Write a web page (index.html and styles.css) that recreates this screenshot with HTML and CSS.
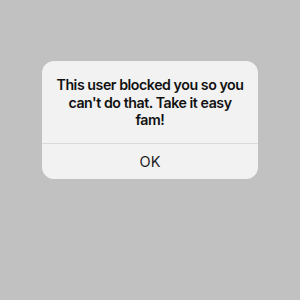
FILE: index.html
```html
<!DOCTYPE html>
<html>
<head><link rel="stylesheet" href="styles.css"></head>
<body>
<div class="screen">
  <div class="alert">
    <div class="message">This user blocked you so you can't do that. Take it easy fam!</div>
    <div class="action">OK</div>
  </div>
</div>
</body>
</html>
```
FILE: styles.css
```css
html, body { margin: 0; padding: 0; }
body { width: 300px; height: 300px; background: #c1c1c1; font-family: "Inter", "Liberation Sans", sans-serif; }
.screen { display: flex; justify-content: center; padding-top: 61px; }
.alert { width: 216px; background: #f2f2f2; border-radius: 12px; overflow: hidden; }
.message { padding: 15px 14px 14px; text-align: center; font-size: 14.2px; font-weight: 600; letter-spacing: -0.45px; line-height: 17.5px; color: #111; border-bottom: 1px solid #d9d9d9; }
.action { height: 35px; display: flex; align-items: center; justify-content: center; font-size: 14.5px; color: #222; }
```
